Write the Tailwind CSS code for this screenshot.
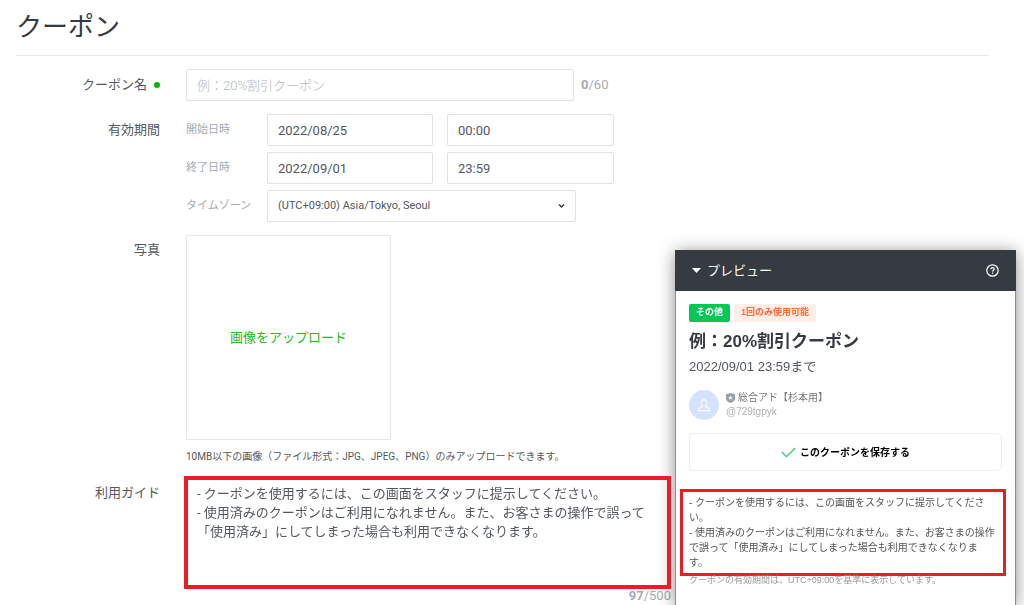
<!DOCTYPE html>
<html lang="ja">
<head>
<meta charset="utf-8">
<meta name="viewport" content="width=device-width, initial-scale=1">
<title>クーポン</title>
<script src="https://cdn.jsdelivr.net/npm/@tailwindcss/browser@4"></script>
</head>
<body class="h-screen overflow-hidden bg-white font-['Roboto','Noto_Sans_CJK_JP',sans-serif] text-[13px] text-[#53585e]">
<main class="pl-4 pr-[35px]">
  <h1 class="flex h-14 items-center border-b border-[#e9eaed] text-[26px] text-[#363a41]">クーポン</h1>

  <form class="mt-[13px] grid grid-cols-[144px_minmax(0,1fr)] gap-x-[26px]">
    <label for="name" class="flex h-8 items-center justify-end gap-[7px]">クーポン名<span class="size-[6px] rounded-full bg-[#00b900]"></span></label>
    <div class="mb-[13px] flex items-center gap-[7px]">
      <input id="name" type="text" placeholder="例：20%割引クーポン" class="h-8 w-[388px] rounded-xs border border-[#dfe1e6] px-[10px] placeholder:font-light placeholder:text-[#b3b9c2]">
      <span class="text-[#a5acb5]"><b class="font-bold">0</b>/60</span>
    </div>

    <span class="flex h-8 items-center justify-end">有効期間</span>
    <div class="mb-[13px] grid grid-cols-[67px_166px_167px] items-center gap-x-[14px] gap-y-[6px]">
      <span class="pt-px text-[11px] text-[#a5acb5]">開始日時</span>
      <input type="text" aria-label="開始日" value="2022/08/25" class="h-8 rounded-xs border border-[#dfe1e6] px-[10px]">
      <input type="text" aria-label="開始時刻" value="00:00" class="h-8 rounded-xs border border-[#dfe1e6] px-[10px]">
      <span class="pt-px text-[11px] text-[#a5acb5]">終了日時</span>
      <input type="text" aria-label="終了日" value="2022/09/01" class="h-8 rounded-xs border border-[#dfe1e6] px-[10px]">
      <input type="text" aria-label="終了時刻" value="23:59" class="h-8 rounded-xs border border-[#dfe1e6] px-[10px]">
      <label for="tz" class="whitespace-nowrap pt-px text-[11px] text-[#a5acb5]">タイムゾーン</label>
      <div class="relative col-span-2 w-[309px]">
        <select id="tz" class="h-8 w-full appearance-none rounded-xs border border-[#dfe1e6] bg-white px-[10px] text-[11px]">
          <option>(UTC+09:00) Asia/Tokyo, Seoul</option>
        </select>
        <svg class="pointer-events-none absolute top-[13px] right-[11px]" width="7" height="6" viewBox="0 0 7 6" fill="none" stroke="#363a41" stroke-width="1.500"><path d="M1 1.500 3.500 4 6 1.500"/></svg>
      </div>
    </div>

    <span class="flex h-[30px] items-center justify-end">写真</span>
    <div class="mb-[11px]">
      <button type="button" class="block size-[205px] border border-[#e6e7ea] text-[#22b922]">画像をアップロード</button>
      <p class="mt-[9px] text-[10px] leading-4">10MB以下の画像（ファイル形式：JPG、JPEG、PNG）のみアップロードできます。</p>
    </div>

    <label for="guide" class="flex h-[34px] items-center justify-end">利用ガイド</label>
    <div class="-ml-[2px] w-[487px]">
      <textarea id="guide" class="relative z-20 block h-[113px] w-full resize-none overflow-hidden border-4 border-[#ed1c24] bg-transparent px-[9px] py-1 leading-[19px]">- クーポンを使用するには、この画面をスタッフに提示してください。
- 使用済みのクーポンはご利用になれません。また、お客さまの操作で誤って
「使用済み」にしてしまった場合も利用できなくなります。</textarea>
      <p class="text-right leading-[14px] text-[#a5acb5]"><b class="font-bold">97</b>/500</p>
    </div>
  </form>
</main>

<!-- Floating preview panel -->
<aside class="fixed right-2 bottom-0 z-10 h-[355px] w-[341px] border-x border-[#8b8f9c] bg-white font-['Liberation_Sans','Noto_Sans_CJK_JP',sans-serif] shadow-[0_2px_16px_rgba(0,0,0,0.45)]">
  <header class="-mx-px flex h-[41px] items-center bg-[#363a41] px-[17px] text-white">
    <button type="button" class="flex items-center gap-[6px] text-[13px]">
      <svg width="9" height="5" viewBox="0 0 9 5" fill="white"><path d="M0 0h9L4.500 5z"/></svg>プレビュー
    </button>
    <button type="button" aria-label="ヘルプ" class="ml-auto">
      <svg width="13" height="13" viewBox="0 0 13 13" fill="none" stroke="white" stroke-width="1.200"><circle cx="6.500" cy="6.500" r="5.700"/><path d="M4.900 5.300c0-1 .7-1.600 1.600-1.600s1.700.6 1.700 1.500c0 1.100-1.600 1.200-1.600 2.400"/><path d="M6.600 8.500v1.200"/></svg>
    </button>
  </header>
  <div class="px-[13px] pt-[13px]">
    <div class="flex gap-1 text-[9px] font-bold">
      <span class="flex h-[18px] items-center rounded-xs bg-[#06c755] px-[7px] text-white">その他</span>
      <span class="flex h-[18px] items-center rounded-xs bg-[#ffefe9] px-[7px] text-[#ff6a33]">1回のみ使用可能</span>
    </div>
    <h2 class="mt-2 text-[17px] leading-6 font-bold text-[#363a41]">例：20%割引クーポン</h2>
    <p class="mt-1 text-[13px] leading-[18px]">2022/09/01 23:59まで</p>
    <div class="mt-[14px] flex items-center gap-[7px]">
      <span class="flex size-[30px] items-center justify-center rounded-full bg-[#d4e2ff]">
        <svg width="12" height="13" viewBox="0 0 12 13" fill="none" stroke="white" stroke-width="1.100" stroke-linejoin="round"><path d="M6 .8c-1.800 0-2.800 1.200-2.800 2.800 0 1.500.6 2.400 1.200 3 .4.500.2 1-.3 1.200L1.600 9c-.7.3-1 .8-1 1.500v1.300h10.800v-1.300c0-.7-.3-1.200-1-1.500L7.900 7.800c-.5-.2-.7-.7-.3-1.200.6-.6 1.200-1.500 1.200-3C8.800 2 7.800.8 6 .8z"/></svg>
      </span>
      <div class="text-[10px] leading-[14px]">
        <p class="flex items-center gap-[3px] text-[#777]">
          <svg width="9" height="10" viewBox="0 0 9 10"><path d="M4.500 0 9 1.300v3.900C9 7.600 7.200 9.200 4.500 10 1.800 9.200 0 7.600 0 5.200V1.300z" fill="#9aa0a8"/><path d="m4.500 2.600.7 1.300 1.500.2-1.100 1 .3 1.500-1.400-.7-1.400.7.300-1.500-1.100-1 1.500-.2z" fill="white"/></svg>総合アド【杉本用】
        </p>
        <p class="text-[#b0b0b0]">@729tgpyk</p>
      </div>
    </div>
    <button type="button" class="mt-[13px] flex h-[38px] w-full items-center justify-center gap-1 rounded border border-[#f1f1f1] text-[10px] font-bold text-black">
      <svg width="15" height="11" viewBox="0 0 15 11" fill="none" stroke="#2bd070" stroke-width="1.300"><path d="M.7 5 5.500 9.700 14.200 1"/></svg>このクーポンを保存する
    </button>
  </div>
  <div class="mt-[18px] mr-[9px] ml-[4px] border-[3px] border-[#ed1c24] px-[6px] py-[3px] text-[10px] leading-[15px] text-[#555]">
    <p class="whitespace-nowrap">- クーポンを使用するには、この画面をスタッフに提示してくださ<br>い。<br>- 使用済みのクーポンはご利用になれません。また、お客さまの操作<br>で誤って「使用済み」にしてしまった場合も利用できなくなりま<br>す。</p>
  </div>
  <p class="px-[13px] text-[9px] leading-[9px] text-[#999]">クーポンの有効期間は、UTC+09:00を基準に表示しています。</p>
</aside>
</body>
</html>
